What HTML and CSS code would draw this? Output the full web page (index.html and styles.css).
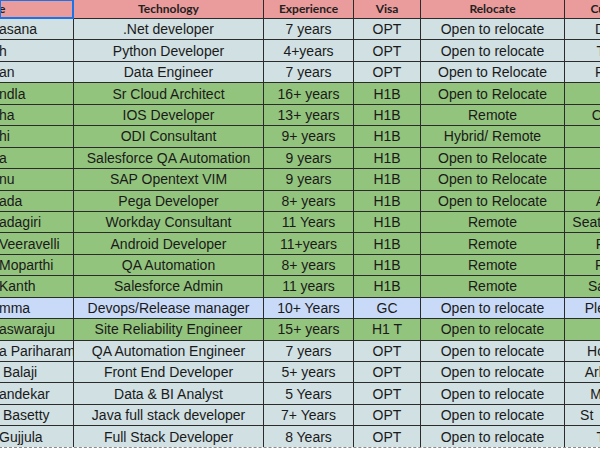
FILE: index.html
```html
<!DOCTYPE html>
<html>
<head>
<meta charset="utf-8">
<link rel="stylesheet" href="styles.css">
</head>
<body>
<div class="sheet">
  <div class="row head">
    <div class="c a sel">e</div><div class="c">Technology</div><div class="c">Experience</div><div class="c">Visa</div><div class="c">Relocate</div><div class="c f">Cu</div>
  </div>
  <div class="row cyan"><div class="c a">asana</div><div class="c">.Net developer</div><div class="c">7 years</div><div class="c">OPT</div><div class="c">Open to relocate</div><div class="c f">D</div></div>
  <div class="row cyan"><div class="c a">h</div><div class="c">Python Developer</div><div class="c">4+years</div><div class="c">OPT</div><div class="c">Open to relocate</div><div class="c f">T</div></div>
  <div class="row cyan"><div class="c a">an</div><div class="c">Data Engineer</div><div class="c">7 years</div><div class="c">OPT</div><div class="c">Open to Relocate</div><div class="c f">R</div></div>
  <div class="row green"><div class="c a">ndla</div><div class="c">Sr Cloud Architect</div><div class="c">16+ years</div><div class="c">H1B</div><div class="c">Open to Relocate</div><div class="c f">I</div></div>
  <div class="row green"><div class="c a">ha</div><div class="c">IOS Developer</div><div class="c">13+ years</div><div class="c">H1B</div><div class="c">Remote</div><div class="c f">Cl</div></div>
  <div class="row green"><div class="c a">hi</div><div class="c">ODI Consultant</div><div class="c">9+ years</div><div class="c">H1B</div><div class="c">Hybrid/ Remote</div><div class="c f">I</div></div>
  <div class="row green"><div class="c a">a</div><div class="c">Salesforce QA Automation</div><div class="c">9 years</div><div class="c">H1B</div><div class="c">Open to Relocate</div><div class="c f">I</div></div>
  <div class="row green"><div class="c a">nu</div><div class="c">SAP Opentext VIM</div><div class="c">9 years</div><div class="c">H1B</div><div class="c">Open to Relocate</div><div class="c f"></div></div>
  <div class="row green"><div class="c a">ada</div><div class="c">Pega Developer</div><div class="c">8+ years</div><div class="c">H1B</div><div class="c">Open to Relocate</div><div class="c f">A</div></div>
  <div class="row green"><div class="c a">adagiri</div><div class="c">Workday Consultant</div><div class="c">11 Years</div><div class="c">H1B</div><div class="c">Remote</div><div class="c f">Seatt</div></div>
  <div class="row green"><div class="c a">Veeravelli</div><div class="c">Android Developer</div><div class="c">11+years</div><div class="c">H1B</div><div class="c">Remote</div><div class="c f">P</div></div>
  <div class="row green"><div class="c a">Moparthi</div><div class="c">QA Automation</div><div class="c">8+ years</div><div class="c">H1B</div><div class="c">Remote</div><div class="c f">R</div></div>
  <div class="row green"><div class="c a">Kanth</div><div class="c">Salesforce Admin</div><div class="c">11 years</div><div class="c">H1B</div><div class="c">Remote</div><div class="c f">Sa</div></div>
  <div class="row blue"><div class="c a">mma</div><div class="c">Devops/Release manager</div><div class="c">10+ Years</div><div class="c">GC</div><div class="c">Open to relocate</div><div class="c f">Ple</div></div>
  <div class="row green"><div class="c a">aswaraju</div><div class="c">Site Reliability Engineer</div><div class="c">15+ years</div><div class="c">H1 T</div><div class="c">Open to relocate</div><div class="c f">I</div></div>
  <div class="row cyan"><div class="c a">a Pariharam</div><div class="c">QA Automation Engineer</div><div class="c">7 years</div><div class="c">OPT</div><div class="c">Open to relocate</div><div class="c f">Ho</div></div>
  <div class="row cyan"><div class="c a"> Balaji</div><div class="c">Front End Developer</div><div class="c">5+ years</div><div class="c">OPT</div><div class="c">Open to relocate</div><div class="c f">Arli</div></div>
  <div class="row cyan"><div class="c a">andekar</div><div class="c">Data &amp; BI Analyst</div><div class="c">5 Years</div><div class="c">OPT</div><div class="c">Open to relocate</div><div class="c f">Mi</div></div>
  <div class="row cyan"><div class="c a"> Basetty</div><div class="c">Java full stack developer</div><div class="c">7+ Years</div><div class="c">OPT</div><div class="c">Open to relocate</div><div class="c f">St   </div></div>
  <div class="row cyan"><div class="c a">Gujjula</div><div class="c">Full Stack Developer</div><div class="c">8 Years</div><div class="c">OPT</div><div class="c">Open to relocate</div><div class="c f">T</div></div>
</div>
</body>
</html>
```

FILE: styles.css
```css
html, body {
  margin: 0;
  padding: 0;
  background: #ffffff;
  overflow: hidden;
  width: 600px;
  height: 450px;
}

.sheet {
  display: grid;
  grid-template-columns: 73px 189px 89px 66px 143px 40px;
  grid-template-rows: 18px repeat(20, 20.45px);
  gap: 1px;
  padding: 1px 1px 0 1px;
  margin: -1px 0 0 -1px;
  width: max-content;
  background: #2b2b2b;
  background-clip: padding-box;
  border-bottom: 1px dashed #8a8a8a;
  font-family: "Liberation Sans", Arial, sans-serif;
  font-size: 14px;
  color: #1a1a1a;
}

.row {
  display: contents;
}

.c {
  display: flex;
  align-items: center;
  justify-content: center;
  white-space: pre;
  overflow: hidden;
  line-height: 1;
}

.c.a {
  justify-content: flex-start;
  text-indent: -1px;
}

.c.f {
  justify-content: flex-end;
  overflow: visible;
}

.head .c {
  background: #ea9b9b;
  font-family: Lato, "Liberation Sans", sans-serif;
  font-weight: 700;
  font-size: 12px;
  color: #222222;
}

.head .c.sel {
  outline: 2px solid #1a73e8;
  outline-offset: -1px;
  position: relative;
  z-index: 1;
}

.cyan .c {
  background: #d0e0e3;
}

.green .c {
  background: #93c47d;
}

.blue .c {
  background: #c9daf8;
}
```
